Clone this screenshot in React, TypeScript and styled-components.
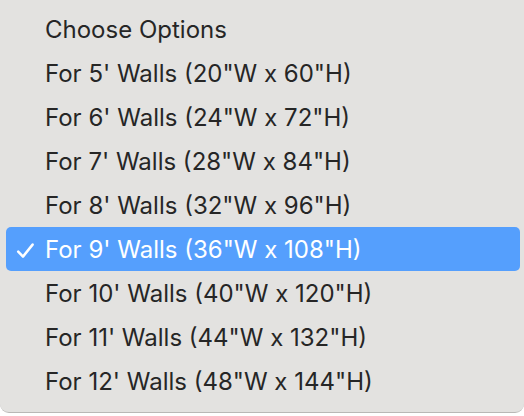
import React from 'react';
import styled, { createGlobalStyle } from 'styled-components';

const options = [
  'Choose Options',
  `For 5' Walls (20"W x 60"H)`,
  `For 6' Walls (24"W x 72"H)`,
  `For 7' Walls (28"W x 84"H)`,
  `For 8' Walls (32"W x 96"H)`,
  `For 9' Walls (36"W x 108"H)`,
  `For 10' Walls (40"W x 120"H)`,
  `For 11' Walls (44"W x 132"H)`,
  `For 12' Walls (48"W x 144"H)`,
];

const SELECTED = 5;

const App = () => {
  return (
    <>
      <GlobalStyle />
      <Page>
        <Menu>
          {options.map((label, i) => (
            <Item key={label} selected={i === SELECTED}>
              <Check>
                {i === SELECTED && (
                  <svg width="17" height="17" viewBox="0 0 17 17" overflow="visible">
                    <path
                      d="M1.2 10.6 L6 15.6 L15.6 3.6"
                      fill="none"
                      stroke="#fff"
                      strokeWidth="2.5"
                      strokeLinecap="round"
                      strokeLinejoin="round"
                    />
                  </svg>
                )}
              </Check>
              <Label>{label}</Label>
            </Item>
          ))}
        </Menu>
      </Page>
    </>
  );
};

const GlobalStyle = createGlobalStyle`
  html, body {
    margin: 0;
    padding: 0;
    background: #ffffff;
  }
`;

const Page = styled.div`
  width: 524px;
  height: 416px;
  overflow: hidden;
  background: #ffffff;
`;

const Menu = styled.div`
  box-sizing: border-box;
  height: 413px;
  padding: 7px 4px 0 6px;
  background: #e3e2e0;
  border-bottom: 1px solid #b9b8b6;
  border-radius: 0 0 9px 9px;
  display: flex;
  flex-direction: column;
  font-family: Inter, 'Liberation Sans', sans-serif;
`;

const Item = styled.div<{ selected: boolean }>`
  display: flex;
  align-items: center;
  height: 44px;
  border-radius: 5px;
  background: ${(p) => (p.selected ? '#559ffd' : 'transparent')};
  color: ${(p) => (p.selected ? '#ffffff' : '#262626')};
`;

const Check = styled.span`
  width: 39px;
  display: flex;
  justify-content: center;
`;

const Label = styled.span`
  font-size: 24px;
  white-space: nowrap;
`;

export default App;
